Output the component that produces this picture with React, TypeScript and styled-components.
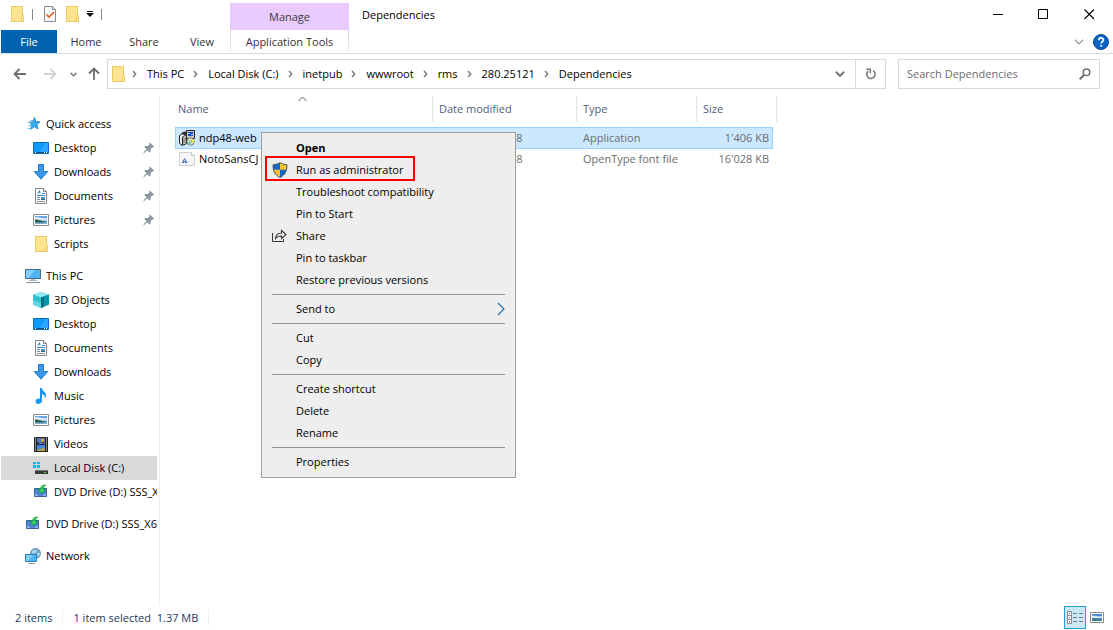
import React from "react";
import styled, { createGlobalStyle } from "styled-components";

const GlobalStyle = createGlobalStyle`
  * { box-sizing: border-box; }
  body {
    margin: 0;
    background: #fff;
    color: #000;
    font: 11px/16px "Open Sans", "Noto Sans", sans-serif;
  }
  button, input { font: inherit; color: inherit; border: 0; background: none; padding: 0; margin: 0; }
  svg { display: block; flex: none; }
`;

/* ---------- icons ---------- */

const FolderIcon = () => (
  <svg width="16" height="16" viewBox="0 0 16 16">
    <path d="M2.500.5h11v9h1v6h-12z" fill="#ffe391" stroke="#ecca5e" />
    <path d="M12.500 15.500v-5l1-1h1v6z" fill="#ffe9a6" stroke="#ecca5e" />
  </svg>
);

const PropertiesIcon = () => (
  <svg width="16" height="16" viewBox="0 0 16 16">
    <path d="M2.500.5h8l3 3v12h-11z" fill="#f8f8f8" stroke="#8a8a8a" />
    <path d="M10.500.5v3h3" fill="#ddd" stroke="#8a8a8a" />
    <path d="M4.500 8.500l2.500 2.500 5-5" fill="none" stroke="#e8602c" strokeWidth="1.700" />
  </svg>
);

const CustomizeIcon = () => (
  <svg width="8" height="6" viewBox="0 0 8 6">
    <path d="M1 0h6v1H1zM0 2h8L4 6z" fill="#111" />
  </svg>
);

const MinimizeIcon = () => (
  <svg width="11" height="11" viewBox="0 0 11 11"><path d="M1 5h10v1H1z" fill="#000" /></svg>
);
const MaximizeIcon = () => (
  <svg width="11" height="11" viewBox="0 0 11 11"><path d="M.5.5h9v9h-9z" fill="none" stroke="#000" /></svg>
);
const CloseIcon = () => (
  <svg width="11" height="11" viewBox="0 0 11 11"><path d="M.5.5l9.500 9.500M10 .5L.5 10" fill="none" stroke="#000" strokeWidth="1.100" /></svg>
);

const HelpIcon = () => (
  <svg width="16" height="16" viewBox="0 0 16 16">
    <circle cx="8" cy="8" r="7.500" fill="#0a63c4" stroke="#0b4a94" />
    <path d="M5.800 6.200c0-3 4.600-2.900 4.600-.2 0 1.700-2.200 1.700-2.200 3.600" fill="none" stroke="#fff" strokeWidth="1.700" />
    <path d="M7.300 10.900h1.800v1.700H7.300z" fill="#fff" />
  </svg>
);

const ArrowIcon = ({ color, turn = 0 }: { color: string; turn?: number }) => (
  <svg width="14" height="14" viewBox="0 0 14 14">
    <g transform={`rotate(${turn} 7 7)`}>
      <path d="M13 7H2M6.500 2L1.500 7l5 5" fill="none" stroke={color} strokeWidth="1.800" />
    </g>
  </svg>
);

const ChevronDown = ({ color, size = 8, weight = 2 }: { color: string; size?: number; weight?: number }) => (
  <svg width={size} height={size} viewBox="0 0 8 8">
    <path d="M.7 2.200L4 5.500l3.300-3.300" fill="none" stroke={color} strokeWidth={weight} />
  </svg>
);

const CrumbIcon = () => (
  <svg width="5" height="8" viewBox="0 0 5 8">
    <path d="M1 1l2.700 3L1 7" fill="none" stroke="#777" strokeWidth="1.400" />
  </svg>
);

const RefreshIcon = () => (
  <svg width="12" height="12" viewBox="0 0 12 12">
    <path d="M8.200 2.700A4.200 4.200 0 1 1 3 3.200" fill="none" stroke="#777" strokeWidth="1.600" />
    <path d="M1.300 1.200h4v4" fill="none" stroke="#777" strokeWidth="1.500" />
  </svg>
);

const SearchIcon = () => (
  <svg width="12" height="12" viewBox="0 0 12 12">
    <circle cx="7.500" cy="4.300" r="3.300" fill="none" stroke="#707070" strokeWidth="1.500" />
    <path d="M5.200 6.700L.7 11.200" stroke="#707070" strokeWidth="2" />
  </svg>
);

const SortIcon = () => (
  <svg width="9" height="6" viewBox="0 0 9 6">
    <path d="M.5 5l4-4 4 4" fill="none" stroke="#5a5a5a" />
  </svg>
);

const StarIcon = () => (
  <svg width="16" height="16" viewBox="0 0 16 16">
    <path d="M9.500 1.500l1.600 4 3.900.3-3 2.600 1 4.600-3.600-2.300L5.500 13.500l1.300-4.600L4 6h3.800z" fill="#3cabee" stroke="#1b80c4" strokeWidth=".8" />
    <path d="M5.500 4.500h3M2.500 6.500h4M3.500 9.500h3M2.500 12.500h4" stroke="#6bbdf0" />
  </svg>
);

const DesktopIcon = () => (
  <svg width="16" height="16" viewBox="0 0 16 16">
    <path d="M.5 2.500h15v11H.5z" fill="#0d98fb" stroke="#0c6cb5" />
    <path d="M12 3l3 0v9h-8z" fill="#2ba7ff" />
    <path d="M1 12h14v1H1z" fill="#084f88" />
    <path d="M2 12h1v1H2zM11 12h1v1h-1zM13 12h1v1h-1z" fill="#fff" />
  </svg>
);

const DownloadIcon = () => (
  <svg width="16" height="16" viewBox="0 0 16 16">
    <path d="M5.500.5h5v7h4.300L8 15.200 1.200 7.500h4.300z" fill="#3b97e8" stroke="#2478c8" />
  </svg>
);

const DocumentIcon = () => (
  <svg width="16" height="16" viewBox="0 0 16 16">
    <path d="M2.500.5h8l3 3v12h-11z" fill="#fff" stroke="#858585" />
    <path d="M10.500.5v3h3" fill="#e4e4e4" stroke="#858585" />
    <path d="M5 5.500l1.500-3 .5 3M9 5.500h3M4 7.500h8" fill="none" stroke="#2c85c7" />
    <path d="M4 9.500h3M4 11.500h3M4 13.500h8" stroke="#8a8a8a" />
    <path d="M8 9h4v3H8z" fill="#4c90bd" />
    <path d="M8 11h4v1H8z" fill="#38677d" />
  </svg>
);

const PictureIcon = () => (
  <svg width="16" height="16" viewBox="0 0 16 16">
    <path d="M.5 2.500h15v11H.5z" fill="#fff" stroke="#8c8c8c" />
    <path d="M2 4h12v8H2z" fill="#6ba6e6" />
    <path d="M2 5.500c3-1.500 5 1.500 12 .5v2.500H2z" fill="#dcecfa" />
    <path d="M2 8.500c4 0 7 1.500 12 1.200V12H2z" fill="#7fb0d0" />
    <path d="M2 7.500c4 0 6 1.800 12 2.200-6 1-9 1-12 .6z" fill="#28604f" />
  </svg>
);

const ComputerIcon = () => (
  <svg width="16" height="16" viewBox="0 0 16 16">
    <path d="M.5 1.500h15v9H.5z" fill="#52b3f3" stroke="#446d8a" />
    <path d="M1 2h9L4 10H1z" fill="#83cdfb" />
    <path d="M6 11h4v2H6z" fill="#b4bec6" />
    <path d="M4 12.500h8" stroke="#a9b4bd" />
    <path d="M1 14.500h14" stroke="#8795a0" />
  </svg>
);

const CubeIcon = () => (
  <svg width="16" height="16" viewBox="0 0 16 16">
    <path d="M8 0l8 2.600v10L8 16l-8-3.400v-10z" fill="#2fc0d2" />
    <path d="M8 0l8 2.600L8 5.500 0 2.600z" fill="#93e6ef" />
    <path d="M8 5.500l8-2.900v10L8 16z" fill="#0a93ab" />
    <path d="M8 5.500l3-1v10.200L8 16z" fill="#056f86" />
    <path d="M0 8l8 3v5l-8-3.400z" fill="#5fd6e3" />
  </svg>
);

const MusicIcon = () => (
  <svg width="16" height="16" viewBox="0 0 16 16">
    <path d="M7 0h1.800c.2 3 4.400 3.600 4.200 7.500 0 1.300-.6 2.300-1.300 3.100.6-2.600-.5-3.900-2.700-4.600v6.800C9 14.600 7.300 16 5.300 16 3.600 16 2.500 15 2.500 13.600c0-2.100 2.300-3.500 4.500-2.900z" fill="#1596f3" />
  </svg>
);

const VideoIcon = () => (
  <svg width="16" height="16" viewBox="0 0 16 16">
    <path d="M1 1h14v15H1z" fill="#262626" />
    <path d="M2.500 1.500v14M13.500 1.500v14" stroke="#e8e8e8" strokeDasharray="1 1" />
    <path d="M4 2h8v6H4z" fill="#4f78b8" />
    <path d="M4 9h8v6H4z" fill="#3f88ea" />
    <path d="M8 3h3v2l-1 1H8z" fill="#d8a62b" />
    <path d="M4 6h2v2H4zM9 6h2v1H9z" fill="#2b3a55" />
    <path d="M4 14l2-1h2l2-2 2 2v2H4z" fill="#b8a24a" />
  </svg>
);

const DiskIcon = () => (
  <svg width="16" height="16" viewBox="0 0 16 16">
    <path d="M0 2h3v2H0zM4 2h3v2H4zM0 5h3v3H0zM4 5h3v3H4z" fill="#19b1ea" />
    <path d="M3.500 8.500h10l1.500 2H2z" fill="#d3d3d3" />
    <path d="M2 10h13v4H2z" fill="#3a3a3a" />
    <path d="M2 10h13v1H2z" fill="#777" />
    <path d="M11 12h2v1h-2z" fill="#55e04d" />
  </svg>
);

const DvdIcon = () => (
  <svg width="16" height="16" viewBox="0 0 16 16">
    <path d="M1.500 4.500h12v8h-12z" fill="#4d86ce" stroke="#38649c" />
    <path d="M2 9l4 3H2zM13 9l-4 3h4z" fill="#87b3e6" />
    <path d="M12.500 1C9.500.8 7.800 2 7.500 5H4.800l4 4.700 4-4.700h-2.500c.1-2 .8-3 2.200-3.300z" fill="#35cf63" stroke="#17883a" strokeWidth=".7" />
  </svg>
);

const NetworkIcon = () => (
  <svg width="16" height="16" viewBox="0 0 16 16">
    <circle cx="10.500" cy="5.500" r="5" fill="#6ba9cf" stroke="#487c9f" strokeWidth=".7" />
    <path d="M7 3c2-2 3-1 4-1s1 2-1 3-3 1-3-2zM12 5l3 0c0 2-1 3-2 4z" fill="#b4d6e8" />
    <path d="M.5 6.500h11v7H.5z" fill="#4db5f0" stroke="#2c7fb5" />
    <path d="M1 7h7l-5 6H1z" fill="#82d0fa" />
    <path d="M3 15.500h7" stroke="#8ba2b0" />
  </svg>
);

const PinIcon = () => (
  <svg width="12" height="12" viewBox="0 0 12 12">
    <path d="M7.200.8l4 4-1.200.8-.8-.2-1.700 1.900.2 2.200-1.100 1-2.200-2.200L1 11.200l-.6-.6 3-3.300-2.200-2.200 1-1.100 2.300.2 1.900-1.800-.2-.7z" fill="#8796a2" />
  </svg>
);

const InstallerIcon = () => (
  <svg width="16" height="16" viewBox="0 0 16 16">
    <path d="M7.500.5h8v8h-8z" fill="#c8c8c8" stroke="#222" />
    <path d="M9 2h5v4H9z" fill="#1a48d0" />
    <path d="M9 3h2v1H9zM12 4h2v1h-2z" fill="#7fe0f0" />
    <path d="M.5 5.500l3-2 4 1v9l-4 2-3-2z" fill="#e8e8e8" stroke="#222" />
    <path d="M3.500 7v8M3.500 7l4-2.500" stroke="#222" />
    <path d="M4 8l3-1.500v6L4 14z" fill="#9b9b9b" />
    <path d="M2 3l4-1.500L8 3 5 5z" fill="#222" />
    <circle cx="11.500" cy="11.500" r="3.700" fill="#cfe8b4" stroke="#666" strokeWidth=".8" />
    <path d="M11.500 11.500l3-2a3.500 3.500 0 0 1 .5 3z" fill="#f3e64d" />
    <path d="M11.500 11.500l-3 1.500a3.500 3.500 0 0 0 3 2z" fill="#5ed3d8" />
    <circle cx="11.500" cy="11.500" r="1" fill="#fff" stroke="#555" strokeWidth=".5" />
  </svg>
);

const FontFileIcon = () => (
  <svg width="16" height="14" viewBox="0 0 16 14">
    <path d="M.5.5h12l3 3v10H.5z" fill="#f5f5f5" stroke="#cfcfcf" />
    <path d="M12.500.5v3h3" fill="#fff" stroke="#c2c2c2" />
    <path d="M3 10.500h2M6 10.500h2.500M3.500 10.500l2-4 2 4M4.500 9.500h2" fill="none" stroke="#3c6fb8" />
  </svg>
);

const ShieldIcon = () => (
  <svg width="16" height="16" viewBox="0 0 16 16">
    <path d="M8 .6c2 1.500 4.300 2 6.900 2C15.200 9 13 13.200 8 15.500 3 13.200.8 9 1.100 2.600c2.600 0 4.900-.5 6.900-2z" fill="#1468c8" />
    <path d="M8 .6c2 1.500 4.300 2 6.900 2 .1 2 0 3.700-.4 5.200H8z" fill="#fdbf2d" />
    <path d="M1.500 7.800H8v7.700C4.300 13.800 2.200 11.300 1.500 7.800z" fill="#fdbf2d" />
    <path d="M8 .6c2 1.500 4.300 2 6.900 2C15.200 9 13 13.200 8 15.500 3 13.200.8 9 1.100 2.600c2.600 0 4.900-.5 6.900-2z" fill="none" stroke="#4d5b66" />
  </svg>
);

const ShareIcon = () => (
  <svg width="16" height="16" viewBox="0 0 16 16">
    <path d="M.5 5v8.500h11V11" fill="none" stroke="#333" />
    <path d="M9.500 2.500l4.500 4-4.500 4V8C7 8 5 8.500 3.500 10.500 3.800 7 6 5 9.500 5z" fill="none" stroke="#333" strokeWidth="1.100" />
  </svg>
);

const SubmenuIcon = () => (
  <svg width="8" height="14" viewBox="0 0 8 14">
    <path d="M1 1l6 6-6 6" fill="none" stroke="#1f6faf" strokeWidth="1.200" />
  </svg>
);

const DetailsViewIcon = () => (
  <svg width="16" height="13" viewBox="0 0 16 13">
    <path d="M.5.5h4v12h-4zM.5 4.500h4M.5 8.500h4" fill="#fff" stroke="#8c8c8c" />
    <path d="M2 2h1v1H2zM2 6h1v1H2z" fill="#557" />
    <path d="M2 10h1v1H2z" fill="#a33" />
    <path d="M6 2.500h4M12 2.500h4M6 6.500h4M12 6.500h4M6 10.500h4M12 10.500h4" stroke="#777" />
  </svg>
);

const LargeViewIcon = () => (
  <svg width="14" height="11" viewBox="0 0 14 11">
    <path d="M.5.5h13v10H.5z" fill="#fff" stroke="#8c8c8c" />
    <path d="M2 2h10v7H2z" fill="#4d87d8" />
    <path d="M2 4c3-1 6 1 10 0v2H2z" fill="#d3e8f8" />
    <path d="M2 6c4 0 6 1 10 2v1H2z" fill="#3d7f8e" />
  </svg>
);

/* ---------- layout ---------- */

const Window = styled.div`
  display: flex;
  flex-direction: column;
  min-height: 100vh;
`;

const TitleBar = styled.header`
  display: flex;
  height: 30px;
  padding-right: 1px;
`;

const QuickTools = styled.div`
  display: flex;
  align-items: center;
  width: 230px;
  height: 28px;
  padding-left: 9px;
`;

const ToolButton = styled.button<{ $narrow?: boolean }>`
  display: flex;
  align-items: center;
  justify-content: center;
  width: ${(p) => (p.$narrow ? 8 : 16)}px;
  height: 20px;
`;

const ToolGroup = styled.div`
  display: flex;
  align-items: center;
  gap: 6px;
`;

const Divider = styled.span`
  width: 1px;
  height: 11px;
  margin: 0 9px 0 7px;
  background: #8a8a8a;
`;

const ContextTab = styled.div`
  width: 119px;
  margin-top: 3px;
  background: #e9cafc;
  color: #3b3b3b;
  line-height: 28px;
  text-align: center;
`;

const WindowTitle = styled.h1`
  flex: 1;
  margin: 0 0 0 13px;
  font-size: 11px;
  font-weight: 400;
  line-height: 30px;
`;

const WindowButton = styled.button`
  display: flex;
  align-items: center;
  justify-content: center;
  width: 46px;
  height: 28px;
`;

const Ribbon = styled.nav`
  display: flex;
  height: 24px;
  padding: 0 4px 0 1px;
  border-bottom: 1px solid #dadbdc;
`;

const RibbonTab = styled.button<{ $file?: boolean; $context?: boolean }>`
  width: ${(p) => (p.$context ? 119 : p.$file ? 56 : 58)}px;
  background: ${(p) => (p.$file ? "#0063b1" : "none")};
  color: ${(p) => (p.$file ? "#fff" : "#333")};
  ${(p) =>
    p.$context &&
    `border: solid; border-width: 0 1px;
     border-image: linear-gradient(#d0d0d0, #f4f4f4) 1;
     margin-left: -1px;`}
`;

const RibbonEnd = styled.div`
  display: flex;
  align-items: center;
  gap: 6px;
  margin-left: auto;
`;

const AddressRow = styled.div`
  display: flex;
  padding: 5px 13px 7px 5px;
`;

const NavButton = styled.button<{ $w: number }>`
  display: flex;
  align-items: center;
  justify-content: center;
  width: ${(p) => p.$w}px;
  height: 30px;
`;

const AddressBox = styled.div`
  display: flex;
  align-items: center;
  flex: 1;
  height: 30px;
  padding-left: 2px;
  border: 1px solid #d9d9d9;
`;

const Crumbs = styled.ol`
  display: flex;
  align-items: center;
  flex: 1;
  margin: 0;
  padding: 0 0 0 6px;
  list-style: none;
`;

const Crumb = styled.li`
  display: flex;
  align-items: center;
  gap: 10px;
  margin-right: 9px;
`;

const BoxButton = styled.button<{ $divided?: boolean }>`
  display: flex;
  align-items: center;
  justify-content: center;
  width: 30px;
  height: 28px;
  border-left: ${(p) => (p.$divided ? "1px solid #d9d9d9" : "0")};
`;

const SearchBox = styled.label`
  display: flex;
  align-items: center;
  width: 202px;
  height: 30px;
  margin-left: 12px;
  padding: 0 8px;
  border: 1px solid #d9d9d9;
`;

const SearchInput = styled.input`
  flex: 1;
  min-width: 0;
  outline: 0;
  &::placeholder { color: #6d6d6d; opacity: 1; }
`;

const Body = styled.div`
  display: flex;
  flex: 1;
`;

const Sidebar = styled.nav`
  width: 160px;
  padding: 16px 2px 0 1px;
  border-right: 1px solid #f0f0f0;
`;

const TreeGroup = styled.div`
  margin-bottom: 8px;
`;

const TreeItem = styled.button<{ $root?: boolean; $selected?: boolean }>`
  display: flex;
  align-items: center;
  gap: 5px;
  width: 100%;
  height: 24px;
  padding-left: ${(p) => (p.$root ? 24 : 32)}px;
  background: ${(p) => (p.$selected ? "#d9d9d9" : "none")};
  overflow: hidden;
  white-space: nowrap;
`;

const PinSlot = styled.span`
  margin: 0 2px 0 auto;
`;

const Content = styled.main`
  position: relative;
  flex: 1;
  padding-left: 15px;
`;

const FileTable = styled.table`
  display: block;
  width: 602px;
  border-collapse: collapse;
`;

const TableHead = styled.thead`
  display: block;
`;

const HeadRow = styled.tr`
  display: grid;
  grid-template-columns: 258px 144px 120px 80px;
  height: 26px;
`;

const HeadCell = styled.th<{ $first?: boolean }>`
  display: flex;
  justify-content: space-between;
  padding: 0 6px 0 ${(p) => (p.$first ? 3 : 6)}px;
  border-right: 1px solid #e3e3e3;
  color: #4c607a;
  font-weight: 400;
  line-height: 26px;
`;

const SortMark = styled.span`
  width: 128px;
  height: 6px;
`;

const FileRows = styled.tbody`
  display: block;
  padding: 5px 4px 0 0;
`;

const FileRow = styled.tr<{ $selected?: boolean }>`
  display: grid;
  grid-template-columns: 258px 144px 120px 76px;
  align-items: center;
  height: 22px;
  margin-bottom: -1px;
  border: 1px solid ${(p) => (p.$selected ? "#99d1ff" : "transparent")};
  background: ${(p) => (p.$selected ? "#cce8ff" : "none")};
`;

const NameCell = styled.td`
  display: flex;
  align-items: center;
  gap: 4px;
  padding: 0 0 0 3px;
`;

const InfoCell = styled.td<{ $right?: boolean }>`
  padding: 0 5px;
  color: #6d6d6d;
  text-align: ${(p) => (p.$right ? "right" : "left")};
`;

const Menu = styled.div`
  position: absolute;
  top: 36px;
  left: 101px;
  width: 255px;
  padding: 4px 0;
  border: 1px solid #a0a0a0;
  background: #eee;
`;

const MenuItem = styled.button<{ $strong?: boolean }>`
  position: relative;
  display: flex;
  align-items: center;
  gap: 8px;
  width: 100%;
  height: 22px;
  padding: 0 10px;
  font-weight: ${(p) => (p.$strong ? 700 : 400)};
`;

const MenuIcon = styled.span`
  width: 16px;
  height: 16px;
`;

const MenuLabel = styled.span`
  flex: 1;
  text-align: left;
`;

const MenuRule = styled.hr`
  height: 1px;
  margin: 3px 10px;
  border: 0;
  background: #919191;
`;

const Highlight = styled.span`
  position: absolute;
  top: -3px;
  left: 3px;
  width: 150px;
  height: 25px;
  border: 2px solid #f00;
`;

const StatusBar = styled.footer`
  display: flex;
  align-items: center;
  height: 25px;
  padding: 0 9px 0 15px;
  color: #1e395b;
`;

const StatusText = styled.span`
  padding-right: 10px;
  margin-right: 10px;
  border-right: 1px solid #f0f0f0;
`;

const ViewButtons = styled.div`
  display: flex;
  align-items: center;
  gap: 4px;
  margin-left: auto;
`;

const ViewButton = styled.button<{ $on?: boolean }>`
  display: flex;
  align-items: center;
  justify-content: center;
  width: ${(p) => (p.$on ? 22 : 14)}px;
  height: 23px;
  border: ${(p) => (p.$on ? "1px solid #26a0da" : "0")};
  background: ${(p) => (p.$on ? "#cbe8f6" : "none")};
`;

/* ---------- data ---------- */

type Node = { label: string; icon: React.ReactNode; root?: boolean; pinned?: boolean; selected?: boolean };

const tree: Node[][] = [
  [
    { label: "Quick access", icon: <StarIcon />, root: true },
    { label: "Desktop", icon: <DesktopIcon />, pinned: true },
    { label: "Downloads", icon: <DownloadIcon />, pinned: true },
    { label: "Documents", icon: <DocumentIcon />, pinned: true },
    { label: "Pictures", icon: <PictureIcon />, pinned: true },
    { label: "Scripts", icon: <FolderIcon /> },
  ],
  [
    { label: "This PC", icon: <ComputerIcon />, root: true },
    { label: "3D Objects", icon: <CubeIcon /> },
    { label: "Desktop", icon: <DesktopIcon /> },
    { label: "Documents", icon: <DocumentIcon /> },
    { label: "Downloads", icon: <DownloadIcon /> },
    { label: "Music", icon: <MusicIcon /> },
    { label: "Pictures", icon: <PictureIcon /> },
    { label: "Videos", icon: <VideoIcon /> },
    { label: "Local Disk (C:)", icon: <DiskIcon />, selected: true },
    { label: "DVD Drive (D:) SSS_X", icon: <DvdIcon /> },
  ],
  [{ label: "DVD Drive (D:) SSS_X6", icon: <DvdIcon />, root: true }],
  [{ label: "Network", icon: <NetworkIcon />, root: true }],
];

const crumbs = ["This PC", "Local Disk (C:)", "inetpub", "wwwroot", "rms", "280.25121", "Dependencies"];

type Entry = { label: string; icon?: React.ReactNode; strong?: boolean; marked?: boolean; submenu?: boolean };

const menu: Entry[][] = [
  [
    { label: "Open", strong: true },
    { label: "Run as administrator", icon: <ShieldIcon />, marked: true },
    { label: "Troubleshoot compatibility" },
    { label: "Pin to Start" },
    { label: "Share", icon: <ShareIcon /> },
    { label: "Pin to taskbar" },
    { label: "Restore previous versions" },
  ],
  [{ label: "Send to", submenu: true }],
  [{ label: "Cut" }, { label: "Copy" }],
  [{ label: "Create shortcut" }, { label: "Delete" }, { label: "Rename" }],
  [{ label: "Properties" }],
];

export default function App() {
  return (
    <Window>
      <GlobalStyle />
      <TitleBar>
        <QuickTools>
          <ToolButton aria-label="Folder"><FolderIcon /></ToolButton>
          <Divider />
          <ToolGroup>
            <ToolButton aria-label="Properties"><PropertiesIcon /></ToolButton>
            <ToolButton aria-label="New folder"><FolderIcon /></ToolButton>
            <ToolButton $narrow aria-label="Customize toolbar"><CustomizeIcon /></ToolButton>
          </ToolGroup>
          <Divider />
        </QuickTools>
        <ContextTab>Manage</ContextTab>
        <WindowTitle>Dependencies</WindowTitle>
        <WindowButton aria-label="Minimize"><MinimizeIcon /></WindowButton>
        <WindowButton aria-label="Maximize"><MaximizeIcon /></WindowButton>
        <WindowButton aria-label="Close"><CloseIcon /></WindowButton>
      </TitleBar>

      <Ribbon>
        <RibbonTab $file>File</RibbonTab>
        <RibbonTab>Home</RibbonTab>
        <RibbonTab>Share</RibbonTab>
        <RibbonTab>View</RibbonTab>
        <RibbonTab $context>Application Tools</RibbonTab>
        <RibbonEnd>
          <ToolButton aria-label="Expand ribbon"><ChevronDown color="#999" size={10} weight={1} /></ToolButton>
          <ToolButton aria-label="Help"><HelpIcon /></ToolButton>
        </RibbonEnd>
      </Ribbon>

      <AddressRow>
        <NavButton $w={30} aria-label="Back"><ArrowIcon color="#6e6e6e" /></NavButton>
        <NavButton $w={30} aria-label="Forward"><ArrowIcon color="#d4d4d4" turn={180} /></NavButton>
        <NavButton $w={16} aria-label="Recent locations"><ChevronDown color="#888" size={7} /></NavButton>
        <NavButton $w={26} aria-label="Up"><ArrowIcon color="#6e6e6e" turn={90} /></NavButton>
        <AddressBox>
          <FolderIcon />
          <Crumbs>
            {crumbs.map((c) => (
              <Crumb key={c}><CrumbIcon /><button>{c}</button></Crumb>
            ))}
          </Crumbs>
          <BoxButton aria-label="Previous locations"><ChevronDown color="#777" size={10} weight={1.6} /></BoxButton>
          <BoxButton $divided aria-label="Refresh"><RefreshIcon /></BoxButton>
        </AddressBox>
        <SearchBox>
          <SearchInput placeholder="Search Dependencies" aria-label="Search Dependencies" />
          <SearchIcon />
        </SearchBox>
      </AddressRow>

      <Body>
        <Sidebar>
          {tree.map((group, g) => (
            <TreeGroup key={g}>
              {group.map((n) => (
                <TreeItem key={n.label} $root={n.root} $selected={n.selected}>
                  {n.icon}
                  {n.label}
                  {n.pinned && <PinSlot><PinIcon /></PinSlot>}
                </TreeItem>
              ))}
            </TreeGroup>
          ))}
        </Sidebar>
        <Content>
          <FileTable>
            <TableHead>
              <HeadRow>
                <HeadCell $first>Name<SortMark><SortIcon /></SortMark></HeadCell>
                <HeadCell>Date modified</HeadCell>
                <HeadCell>Type</HeadCell>
                <HeadCell>Size</HeadCell>
              </HeadRow>
            </TableHead>
            <FileRows>
              <FileRow $selected>
                <NameCell><InstallerIcon />ndp48-web</NameCell>
                <InfoCell>14.05.2023, 8:28</InfoCell>
                <InfoCell>Application</InfoCell>
                <InfoCell $right>1'406 KB</InfoCell>
              </FileRow>
              <FileRow>
                <NameCell><FontFileIcon />NotoSansCJ</NameCell>
                <InfoCell>14.05.2023, 8:28</InfoCell>
                <InfoCell>OpenType font file</InfoCell>
                <InfoCell $right>16'028 KB</InfoCell>
              </FileRow>
            </FileRows>
          </FileTable>
          <Menu role="menu">
            {menu.map((section, s) => (
              <React.Fragment key={s}>
                {s > 0 && <MenuRule />}
                {section.map((e) => (
                  <MenuItem key={e.label} role="menuitem" $strong={e.strong}>
                    <MenuIcon>{e.icon}</MenuIcon>
                    <MenuLabel>{e.label}</MenuLabel>
                    {e.submenu && <SubmenuIcon />}
                    {e.marked && <Highlight />}
                  </MenuItem>
                ))}
              </React.Fragment>
            ))}
          </Menu>
        </Content>
      </Body>

      <StatusBar>
        <StatusText>2 items</StatusText>
        <StatusText>1 item selected&nbsp; 1.37 MB</StatusText>
        <ViewButtons>
          <ViewButton $on aria-label="Details view"><DetailsViewIcon /></ViewButton>
          <ViewButton aria-label="Large icons view"><LargeViewIcon /></ViewButton>
        </ViewButtons>
      </StatusBar>
    </Window>
  );
}
